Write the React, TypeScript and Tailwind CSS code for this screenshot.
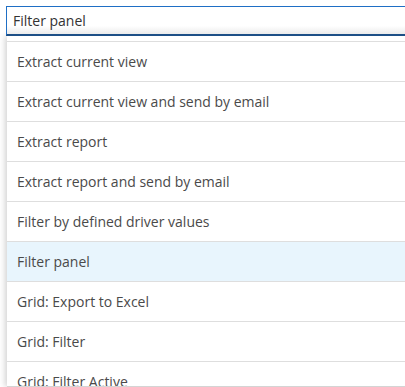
import React from "react";

const items = [
  "Extract current view",
  "Extract current view and send by email",
  "Extract report",
  "Extract report and send by email",
  "Filter by defined driver values",
  "Filter panel",
  "Grid: Export to Excel",
  "Grid: Filter",
  "Grid: Filter Active",
];

export default function App() {
  return (
    <div
      className="relative h-[387px] w-[405px] overflow-hidden bg-white"
      style={{ fontFamily: '"Open Sans", sans-serif' }}
    >
      <div className="pl-[6px] pt-[6px]">
        <div className="relative z-10 flex h-[30px] w-[420px] items-center border-l border-t border-b-2 border-l-[#1f6fc5] border-t-[#1f6fc5] border-b-[#1d4f86] bg-[linear-gradient(to_bottom,#ffffff_70%,#ebebeb)] pl-[6px] text-[14px] text-[#333]">
          Filter panel
        </div>
      </div>
      <div className="ml-[7px] h-[351px] w-[420px] overflow-hidden border-b border-[#d4d4d4] bg-white pt-[5px] shadow-[-2px_0_6px_rgba(0,0,0,0.18)]">
        {items.map((t) => (
          <div
            key={t}
            className={`flex h-[40px] shrink-0 items-center border-t border-[#dedede] pl-[10px] text-[14px] text-[#4a4a4a] ${
              t === "Filter panel" ? "bg-[#e8f5fd]" : "bg-white"
            }`}
          >
            {t}
          </div>
        ))}
      </div>
    </div>
  );
}
